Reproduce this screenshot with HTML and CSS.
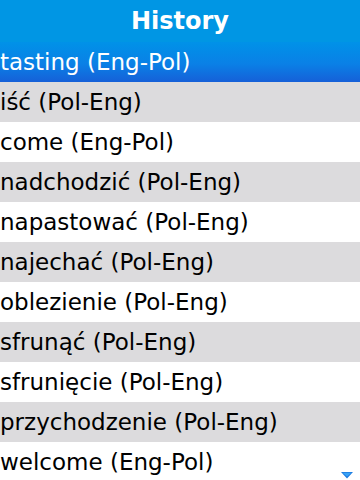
FILE: index.html
```html
<html>
    <head>
        <meta charset="UTF-8">
        <title>History</title>
        <link rel="stylesheet" href="styles.css">
    </head>
    <body>
        <header class="title-bar">History</header>

        <!-- History list -->
        <ul class="history-list">
            <li class="selected">tasting (Eng-Pol)</li>
            <li class="shade">iść (Pol-Eng)</li>
            <li>come (Eng-Pol)</li>
            <li class="shade">nadchodzić (Pol-Eng)</li>
            <li>napastować (Pol-Eng)</li>
            <li class="shade">najechać (Pol-Eng)</li>
            <li>oblezienie (Pol-Eng)</li>
            <li class="shade">sfrunąć (Pol-Eng)</li>
            <li>sfrunięcie (Pol-Eng)</li>
            <li class="shade">przychodzenie (Pol-Eng)</li>
            <li>welcome (Eng-Pol)</li>
        </ul>

        <svg class="more-arrow" width="12" height="7" viewBox="0 0 12 7">
            <polygon points="0,0 12,0 6,6.5" fill="#1a78e0"/>
            <polygon points="1.5,0.8 10.5,0.8 6,4.5" fill="#3aa2f4"/>
        </svg>
    </body>
</html>
```

FILE: styles.css
```css
*{
    font-family: "DejaVu Sans", sans-serif;
}

body, html{
    margin: 0;
}

body{
    position: relative;
    width: 360px;
    height: 480px;
    overflow: hidden;
    background-color: white;
}

.title-bar{
    display: flex;
    justify-content: center;
    align-items: center;
    height: 42px;
    background-color: rgb(0, 150, 228);
    color: white;
    font-size: 24px;
    font-weight: bold;
}

.history-list{
    list-style: none;
    margin: 0;
    padding: 0;
}

.history-list li{
    display: flex;
    align-items: center;
    height: 40px;
    font-size: 23px;
    color: black;
    white-space: nowrap;
}

.history-list .shade{
    background-color: rgb(220, 219, 221);
}

.history-list .selected{
    color: white;
    background: linear-gradient(rgb(0, 146, 232), rgb(10, 128, 230) 55%, rgb(22, 96, 216));
}

.more-arrow{
    position: absolute;
    right: 7px;
    bottom: 1px;
}
```
